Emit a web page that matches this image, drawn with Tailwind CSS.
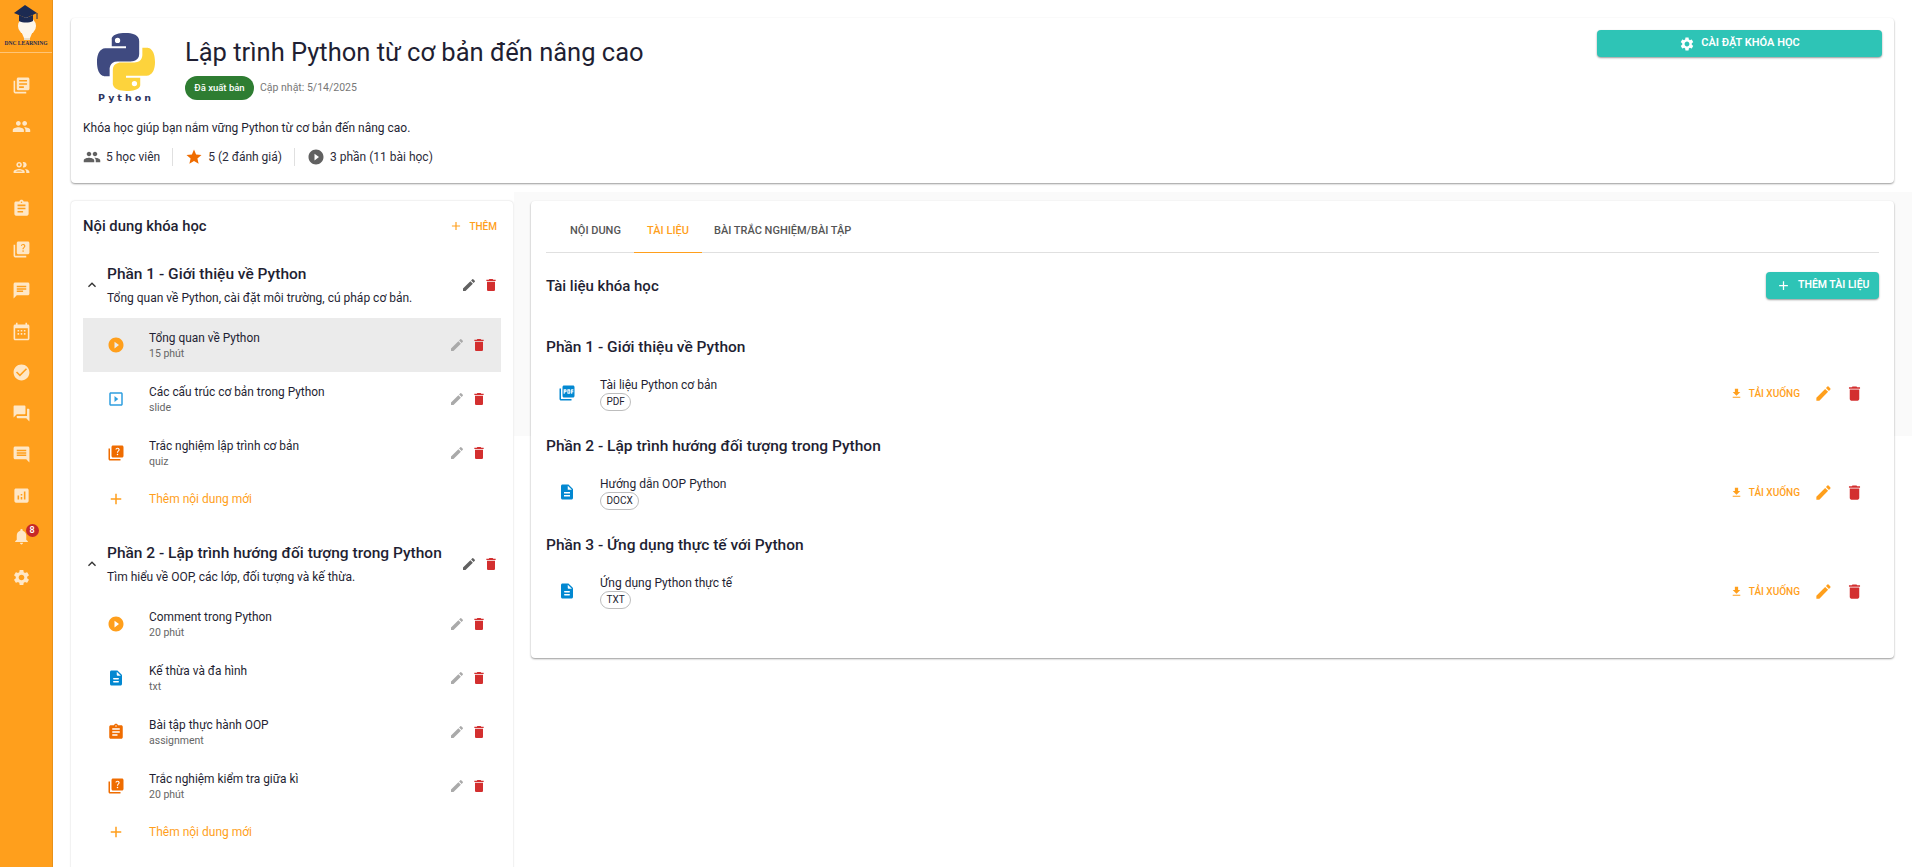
<!DOCTYPE html>
<html lang="vi">
<head>
    <meta charset="UTF-8">
    <meta name="viewport" content="width=device-width, initial-scale=1.0">
    <title>Lập trình Python từ cơ bản đến nâng cao</title>
    <script src="https://cdn.jsdelivr.net/npm/@tailwindcss/browser@4"></script>
</head>
<body class="bg-white h-[867px] overflow-hidden font-['Roboto','Noto_Sans',sans-serif] text-[#1f1f33]">
<svg class="hidden">
    <defs>
        <symbol id="i-book" viewBox="0 0 24 24"><path d="M4 6H2v14c0 1.100.9 2 2 2h14v-2H4zm16-4H8c-1.100 0-2 .9-2 2v12c0 1.100.9 2 2 2h12c1.100 0 2-.9 2-2V4c0-1.100-.9-2-2-2m-1 9H9V9h10zm-4 4H9v-2h6zm4-8H9V5h10z"/></symbol>
        <symbol id="i-people" viewBox="0 0 24 24"><path d="M16 11c1.660 0 2.990-1.340 2.990-3S17.660 5 16 5s-3 1.340-3 3 1.340 3 3 3m-8 0c1.660 0 2.990-1.340 2.990-3S9.660 5 8 5 5 6.340 5 8s1.340 3 3 3m0 2c-2.330 0-7 1.170-7 3.500V19h14v-2.500c0-2.330-4.670-3.500-7-3.500m8 0c-.29 0-.62.02-.97.05 1.160.84 1.970 1.970 1.970 3.450V19h6v-2.500c0-2.330-4.670-3.500-7-3.500"/></symbol>
        <symbol id="i-people-o" viewBox="0 0 24 24"><path d="M9 13.750c-2.340 0-7 1.170-7 3.500V19h14v-1.750c0-2.330-4.660-3.500-7-3.500M4.340 17c.84-.58 2.870-1.250 4.660-1.250s3.820.67 4.660 1.250zM9 12c1.930 0 3.500-1.570 3.500-3.500S10.930 5 9 5 5.500 6.570 5.500 8.500 7.070 12 9 12m0-5c.83 0 1.500.67 1.500 1.500S9.830 10 9 10s-1.500-.67-1.500-1.500S8.170 7 9 7m7.040 6.810c1.160.84 1.960 1.960 1.960 3.440V19h4v-1.750c0-2.020-3.500-3.170-5.960-3.440M15 12c1.930 0 3.500-1.570 3.500-3.500S16.930 5 15 5c-.54 0-1.040.13-1.500.35.630.89 1 1.980 1 3.150s-.37 2.260-1 3.150c.46.220.96.350 1.500.350"/></symbol>
        <symbol id="i-assignment" viewBox="0 0 24 24"><path d="M19 3h-4.180C14.400 1.840 13.300 1 12 1s-2.400.84-2.820 2H5c-1.100 0-2 .9-2 2v14c0 1.100.9 2 2 2h14c1.100 0 2-.9 2-2V5c0-1.100-.9-2-2-2m-7 0c.55 0 1 .45 1 1s-.45 1-1 1-1-.45-1-1 .45-1 1-1m2 14H7v-2h7zm3-4H7v-2h10zm0-4H7V7h10z"/></symbol>
        <symbol id="i-quiz" viewBox="0 0 24 24"><path d="M4 6H2v14c0 1.100.9 2 2 2h14v-2H4z"/><path d="M20 2H8c-1.100 0-2 .9-2 2v12c0 1.100.9 2 2 2h12c1.100 0 2-.9 2-2V4c0-1.100-.9-2-2-2m-5.990 13c-.59 0-1.050-.47-1.050-1.050 0-.59.47-1.040 1.050-1.040.59 0 1.040.45 1.040 1.040-.01.580-.45 1.050-1.040 1.050m2.500-6.170c-.63.930-1.230 1.210-1.560 1.810-.13.240-.18.400-.18 1.180h-1.520c0-.41-.06-1.080.26-1.650.41-.73 1.180-1.160 1.630-1.800.48-.680.210-1.950-1.140-1.950-.880 0-1.320.670-1.500 1.230l-1.370-.57C11.510 5.960 12.520 5 13.990 5c1.230 0 2.080.560 2.510 1.260.370.600.580 1.730.010 2.570"/></symbol>
        <symbol id="i-chat" viewBox="0 0 24 24"><path d="M20 2H4c-1.100 0-1.990.9-1.990 2L2 22l4-4h14c1.100 0 2-.9 2-2V4c0-1.100-.9-2-2-2M6 9h12v2H6zm8 5H6v-2h8zm4-6H6V6h12z"/></symbol>
        <symbol id="i-calendar" viewBox="0 0 24 24"><path d="M20 3h-1V1h-2v2H7V1H5v2H4c-1.100 0-2 .9-2 2v16c0 1.100.9 2 2 2h16c1.100 0 2-.9 2-2V5c0-1.100-.9-2-2-2m0 18H4V8h16zM7 10h2v2H7zm4 0h2v2h-2zm4 0h2v2h-2zm-8 4h2v2H7zm4 0h2v2h-2zm4 0h2v2h-2z"/></symbol>
        <symbol id="i-check" viewBox="0 0 24 24"><path d="M12 2C6.480 2 2 6.480 2 12s4.480 10 10 10 10-4.480 10-10S17.520 2 12 2m-2 15-5-5 1.410-1.410L10 14.170l7.590-7.590L19 8z"/></symbol>
        <symbol id="i-forum" viewBox="0 0 24 24"><path d="M21 6h-2v9H6v2c0 .55.45 1 1 1h11l4 4V7c0-.55-.45-1-1-1m-4 6V3c0-.55-.45-1-1-1H3c-.55 0-1 .45-1 1v14l4-4h10c.55 0 1-.45 1-1"/></symbol>
        <symbol id="i-comment" viewBox="0 0 24 24"><path d="M21.990 4c0-1.100-.89-2-1.990-2H4c-1.100 0-2 .9-2 2v12c0 1.100.9 2 2 2h14l4 4zM18 14H6v-2h12zm0-3H6V9h12zm0-3H6V6h12z"/></symbol>
        <symbol id="i-chart" viewBox="0 0 24 24"><path d="M19 3H5c-1.100 0-2 .9-2 2v14c0 1.100.9 2 2 2h14c1.100 0 2-.9 2-2V5c0-1.100-.9-2-2-2M9 17H7v-5h2zm4 0h-2v-3h2zm0-5h-2v-2h2zm4 5h-2V7h2z"/></symbol>
        <symbol id="i-bell" viewBox="0 0 24 24"><path d="M12 22c1.100 0 2-.9 2-2h-4c0 1.100.89 2 2 2m6-6v-5c0-3.070-1.640-5.640-4.500-6.320V4c0-.83-.67-1.500-1.500-1.500s-1.500.67-1.500 1.500v.68C7.630 5.360 6 7.920 6 11v5l-2 2v1h16v-1z"/></symbol>
        <symbol id="i-gear" viewBox="0 0 24 24"><path d="M19.140 12.940c.04-.3.060-.61.060-.94 0-.32-.02-.64-.07-.94l2.030-1.580c.18-.14.230-.41.120-.61l-1.920-3.320c-.12-.22-.37-.29-.59-.22l-2.390.96c-.5-.38-1.030-.7-1.620-.94l-.36-2.540c-.04-.24-.24-.41-.48-.41h-3.840c-.24 0-.43.170-.47.410l-.36 2.540c-.59.240-1.130.570-1.620.94l-2.390-.96c-.22-.08-.47 0-.59.220L2.740 8.870c-.12.210-.08.470.12.610l2.030 1.580c-.05.300-.09.630-.09.940s.02.640.07.940l-2.030 1.580c-.18.140-.23.410-.12.610l1.920 3.320c.12.220.37.290.59.220l2.390-.96c.5.380 1.030.7 1.620.94l.36 2.540c.05.240.24.410.48.410h3.840c.24 0 .44-.17.470-.41l.36-2.540c.59-.24 1.130-.56 1.620-.94l2.390.96c.22.080.47 0 .59-.22l1.920-3.320c.12-.22.070-.47-.12-.61zM12 15.600c-1.980 0-3.600-1.620-3.600-3.600s1.620-3.600 3.600-3.600 3.600 1.620 3.600 3.600-1.620 3.600-3.600 3.600"/></symbol>
        <symbol id="i-star" viewBox="0 0 24 24"><path d="M12 17.270 18.180 21l-1.640-7.030L22 9.240l-7.190-.61L12 2 9.190 8.630 2 9.240l5.460 4.730L5.820 21z"/></symbol>
        <symbol id="i-play" viewBox="0 0 24 24"><path d="M12 2C6.480 2 2 6.480 2 12s4.480 10 10 10 10-4.480 10-10S17.520 2 12 2m-2 14.500v-9l6 4.500z"/></symbol>
        <symbol id="i-slide" viewBox="0 0 24 24"><path d="M10 8v8l5-4zm9-5H5c-1.100 0-2 .9-2 2v14c0 1.100.9 2 2 2h14c1.100 0 2-.9 2-2V5c0-1.100-.9-2-2-2m0 16H5V5h14z"/></symbol>
        <symbol id="i-doc" viewBox="0 0 24 24"><path d="M14 2H6c-1.100 0-1.990.9-1.990 2L4 20c0 1.100.89 2 1.990 2H18c1.100 0 2-.9 2-2V8zm2 16H8v-2h8zm0-4H8v-2h8zm-3-5V3.500L18.500 9z"/></symbol>
        <symbol id="i-txt" viewBox="0 0 24 24"><path d="M14.590 2.590c-.38-.38-.89-.59-1.420-.59H6c-1.100 0-2 .9-2 2v16c0 1.100.89 2 1.990 2H18c1.100 0 2-.9 2-2V8.830c0-.53-.21-1.040-.59-1.410zM15 18H9c-.55 0-1-.45-1-1s.45-1 1-1h6c.55 0 1 .45 1 1s-.45 1-1 1m0-4H9c-.55 0-1-.45-1-1s.45-1 1-1h6c.55 0 1 .45 1 1s-.45 1-1 1m-2-6V3.500L18.500 9H14c-.55 0-1-.45-1-1"/></symbol>
        <symbol id="i-pdf" viewBox="0 0 24 24"><path d="M20 2H8c-1.100 0-2 .9-2 2v12c0 1.100.9 2 2 2h12c1.100 0 2-.9 2-2V4c0-1.100-.9-2-2-2m-8.500 7.500c0 .83-.67 1.500-1.500 1.500H9v2H7.500V7H10c.83 0 1.500.67 1.500 1.500zm5 2c0 .83-.67 1.500-1.500 1.500h-2.500V7H15c.83 0 1.500.67 1.500 1.500zm4-3H19v1h1.500V11H19v2h-1.500V7h3zM9 9.500h1v-1H9zM4 6H2v14c0 1.100.9 2 2 2h14v-2H4zm10 5.500h1v-3h-1z"/></symbol>
        <symbol id="i-edit" viewBox="0 0 24 24"><path d="M3 17.250V21h3.750L17.810 9.940l-3.750-3.750zM20.710 7.040c.39-.39.39-1.020 0-1.410l-2.340-2.340a.996.996 0 0 0-1.410 0l-1.830 1.830 3.750 3.750z"/></symbol>
        <symbol id="i-trash" viewBox="0 0 24 24"><path d="M6 19c0 1.100.9 2 2 2h8c1.100 0 2-.9 2-2V7H6zM19 4h-3.500l-1-1h-5l-1 1H5v2h14z"/></symbol>
        <symbol id="i-plus" viewBox="0 0 24 24"><path d="M19 13h-6v6h-2v-6H5v-2h6V5h2v6h6z"/></symbol>
        <symbol id="i-up" viewBox="0 0 24 24"><path d="M7.410 15.410 12 10.830l4.590 4.580L18 14l-6-6-6 6z"/></symbol>
        <symbol id="i-download" viewBox="0 0 24 24"><path d="M19 9h-4V3H9v6H5l7 7zM5 18v2h14v-2z"/></symbol>
    </defs>
</svg>

<div class="flex h-full">
    <!-- sidebar -->
    <aside class="w-[53px] shrink-0 h-full bg-[#ff9f1c] border-r border-[#e8911a] flex flex-col text-white/75">
        <div class="relative w-full h-[53px] border-b border-white/40">
            <svg viewBox="0 0 53 42" class="w-[53px] h-[42px]">
                <circle cx="27" cy="26" r="9" fill="#fdf6ea"/>
                <path d="M21 31h12l-3 7h-6z" fill="#fdf6ea"/>
                <path d="M24 38h6v2h-6z" fill="#e9ddc8"/>
                <path d="M25 5 37 13 26 18 14 13z" fill="#1c2a52"/>
                <path d="M19 15v6c4 2 10 2 14 0v-6l-7 3z" fill="#1c2a52"/>
                <path d="M37 13v6" stroke="#1c2a52" stroke-width="1"/>
            </svg>
            <span class="absolute left-0 top-[39px] w-[52px] text-center text-[5.500px] leading-[8px] font-bold text-[#1c2a52] font-['Liberation_Serif',serif] whitespace-nowrap">DNC LEARNING</span>
        </div>
        <nav class="flex flex-col items-center gap-[22px] mt-[22.500px] ml-[11.500px] w-[19px]">
            <svg class="size-[19px]" fill="currentColor"><use href="#i-book"/></svg>
            <svg class="size-[19px]" fill="currentColor"><use href="#i-people"/></svg>
            <svg class="size-[19px]" fill="currentColor"><use href="#i-people-o"/></svg>
            <svg class="size-[19px]" fill="currentColor"><use href="#i-assignment"/></svg>
            <svg class="size-[19px]" fill="currentColor"><use href="#i-quiz"/></svg>
            <svg class="size-[19px]" fill="currentColor"><use href="#i-chat"/></svg>
            <svg class="size-[19px]" fill="currentColor"><use href="#i-calendar"/></svg>
            <svg class="size-[19px]" fill="currentColor"><use href="#i-check"/></svg>
            <svg class="size-[19px]" fill="currentColor"><use href="#i-forum"/></svg>
            <svg class="size-[19px]" fill="currentColor"><use href="#i-comment"/></svg>
            <svg class="size-[19px]" fill="currentColor"><use href="#i-chart"/></svg>
            <div class="relative size-[19px]">
                <svg class="size-[19px]" fill="currentColor"><use href="#i-bell"/></svg>
                <span class="absolute -top-[3px] left-[14px] size-[13px] rounded-full bg-[#c62828] text-white text-[9px] leading-[13px] text-center font-semibold">8</span>
            </div>
            <svg class="size-[19px]" fill="currentColor"><use href="#i-gear"/></svg>
        </nav>
    </aside>

    <!-- page -->
    <main class="flex-1 min-w-0 px-[18px] pt-[18px] relative">
        <div class="absolute left-[461px] right-0 top-[192px] h-[244px] bg-[#fafafa] -z-10"></div>

        <!-- course header -->
        <section class="h-[165px] bg-white rounded-[4px] shadow-[0_1px_2px_rgba(0,0,0,0.4)] px-[12px] flex flex-col">
            <div class="flex justify-between items-start pt-[12px]">
                <div class="flex">
                    <div class="w-[58px] ml-[14px] mt-[3px] flex flex-col items-center">
                        <svg viewBox="0 0 110 110" class="w-[58px] h-[58px] shrink-0">
                            <path d="M54 0C26 0 28 12 28 12v13h27v4H17S0 27 0 55s15 27 15 27h9V69s-1-15 15-15h26s15 0 15-14V15S82 0 54 0zM39 9a5 5 0 1 1 0 10 5 5 0 0 1 0-10z" fill="#3f4a80"/>
                            <path d="M56 110c28 0 26-12 26-12V85H55v-4h38s17 2 17-26-15-27-15-27h-9v13s1 15-15 15H45s-15 0-15 14v25s-2 15 26 15zm15-9a5 5 0 1 1 0-10 5 5 0 0 1 0 10z" fill="#fdd33c"/>
                        </svg>
                        <span class="text-[9.500px] leading-[12px] font-bold tracking-[3px] text-[#2f3560] mt-[1px] font-['DejaVu_Sans',sans-serif]">Python</span>
                    </div>
                    <div class="ml-[30px]">
                        <h1 class="text-[25.500px] leading-[36px] mt-[4px] whitespace-nowrap">Lập trình Python từ cơ bản đến nâng cao</h1>
                        <div class="flex items-center mt-[6px]">
                            <span class="h-[24px] w-[69px] rounded-full bg-[#2e7d32] text-white text-[9.500px] leading-[24px] text-center font-medium whitespace-nowrap">Đã xuất bản</span>
                            <span class="ml-[6px] text-[10.500px] text-[#777]">Cập nhật: 5/14/2025</span>
                        </div>
                    </div>
                </div>
                <button class="w-[285px] h-[27px] bg-[#2ec4b6] rounded-[4px] shadow-[0_1px_2px_rgba(0,0,0,0.4)] text-white text-[11px] font-semibold flex items-center justify-center gap-[6px]">
                    <svg class="size-[16px]" fill="currentColor"><use href="#i-gear"/></svg>CÀI ĐẶT KHÓA HỌC
                </button>
            </div>
            <p class="text-[12px] leading-[18px] mt-[15px]">Khóa học giúp bạn nắm vững Python từ cơ bản đến nâng cao.</p>
            <div class="flex items-center mt-[11px] text-[12px] text-[#2b2b3a]">
                <svg class="size-[18px] text-[#616161]" fill="currentColor"><use href="#i-people"/></svg>
                <span class="ml-[5px]">5 học viên</span>
                <span class="w-px h-[18px] bg-[#e0e0e0] mx-[12px]"></span>
                <svg class="size-[18px] text-[#ef6c00]" fill="currentColor"><use href="#i-star"/></svg>
                <span class="ml-[5px]">5 (2 đánh giá)</span>
                <span class="w-px h-[18px] bg-[#e0e0e0] mx-[12px]"></span>
                <svg class="size-[18px] text-[#616161]" fill="currentColor"><use href="#i-play"/></svg>
                <span class="ml-[5px]">3 phần (11 bài học)</span>
            </div>
        </section>

        <div class="flex gap-[18px] mt-[18px] items-start">
            <!-- outline -->
            <section class="w-[442px] shrink-0 h-[680px] bg-white rounded-[4px] shadow-[0_0_2px_rgba(0,0,0,0.2)] px-[12px]">
                <div class="flex justify-between items-center h-[50px]">
                    <h2 class="text-[14.800px] font-medium">Nội dung khóa học</h2>
                    <span class="flex items-center text-[#ff9f1c] text-[10px] font-medium mr-[4px]">
                        <svg class="size-[14px] mr-[6px]" fill="currentColor"><use href="#i-plus"/></svg>THÊM
                    </span>
                </div>

                <div class="flex items-center mt-[12px]">
                    <svg class="size-[16px] ml-[1px] text-[#333]" fill="currentColor"><use href="#i-up"/></svg>
                    <div class="ml-[7px] flex-1 min-w-0">
                        <h3 class="text-[15.500px] leading-[22px] font-medium">Phần 1 - Giới thiệu về Python</h3>
                        <p class="text-[12px] leading-[18px] mt-[4px]">Tổng quan về Python, cài đặt môi trường, cú pháp cơ bản.</p>
                    </div>
                    <svg class="size-[16px] text-[#616161]" fill="currentColor"><use href="#i-edit"/></svg>
                    <svg class="size-[16px] ml-[6px] mr-[2px] text-[#d32f2f]" fill="currentColor"><use href="#i-trash"/></svg>
                </div>

                <div class="mt-[11px]">
                    <div class="flex items-center h-[54px] bg-[#ebebeb] pl-[24px] pr-[14px]">
                        <svg class="size-[18px] text-[#ff9f1c]" fill="currentColor"><use href="#i-play"/></svg>
                        <div class="ml-[24px] flex-1 min-w-0 leading-[15px] pt-[2px]"><div class="text-[11.900px]">Tổng quan về Python</div><div class="text-[10.500px] text-[#666]">15 phút</div></div>
                        <svg class="size-[16px] text-[#aaa]" fill="currentColor"><use href="#i-edit"/></svg>
                        <svg class="size-[16px] ml-[6px] text-[#d32f2f]" fill="currentColor"><use href="#i-trash"/></svg>
                    </div>
                    <div class="flex items-center h-[54px] pl-[24px] pr-[14px]">
                        <svg class="size-[18px] text-[#2f9fe0]" fill="currentColor"><use href="#i-slide"/></svg>
                        <div class="ml-[24px] flex-1 min-w-0 leading-[15px] pt-[2px]"><div class="text-[11.900px]">Các cấu trúc cơ bản trong Python</div><div class="text-[10.500px] text-[#666]">slide</div></div>
                        <svg class="size-[16px] text-[#aaa]" fill="currentColor"><use href="#i-edit"/></svg>
                        <svg class="size-[16px] ml-[6px] text-[#d32f2f]" fill="currentColor"><use href="#i-trash"/></svg>
                    </div>
                    <div class="flex items-center h-[54px] pl-[24px] pr-[14px]">
                        <svg class="size-[18px] text-[#ef6c00]" fill="currentColor"><use href="#i-quiz"/></svg>
                        <div class="ml-[24px] flex-1 min-w-0 leading-[15px] pt-[2px]"><div class="text-[11.900px]">Trắc nghiệm lập trình cơ bản</div><div class="text-[10.500px] text-[#666]">quiz</div></div>
                        <svg class="size-[16px] text-[#aaa]" fill="currentColor"><use href="#i-edit"/></svg>
                        <svg class="size-[16px] ml-[6px] text-[#d32f2f]" fill="currentColor"><use href="#i-trash"/></svg>
                    </div>
                    <div class="flex items-center h-[37px] pl-[24px] text-[#ff9f1c]">
                        <svg class="size-[18px]" fill="currentColor"><use href="#i-plus"/></svg>
                        <span class="ml-[24px] text-[12px]">Thêm nội dung mới</span>
                    </div>
                </div>

                <div class="flex items-center mt-[25px]">
                    <svg class="size-[16px] ml-[1px] text-[#333]" fill="currentColor"><use href="#i-up"/></svg>
                    <div class="ml-[7px] flex-1 min-w-0">
                        <h3 class="text-[15.500px] leading-[22px] font-medium whitespace-nowrap">Phần 2 - Lập trình hướng đối tượng trong Python</h3>
                        <p class="text-[12px] leading-[18px] mt-[4px]">Tìm hiểu về OOP, các lớp, đối tượng và kế thừa.</p>
                    </div>
                    <svg class="size-[16px] text-[#616161]" fill="currentColor"><use href="#i-edit"/></svg>
                    <svg class="size-[16px] ml-[6px] mr-[2px] text-[#d32f2f]" fill="currentColor"><use href="#i-trash"/></svg>
                </div>

                <div class="mt-[11px]">
                    <div class="flex items-center h-[54px] pl-[24px] pr-[14px]">
                        <svg class="size-[18px] text-[#ff9f1c]" fill="currentColor"><use href="#i-play"/></svg>
                        <div class="ml-[24px] flex-1 min-w-0 leading-[15px] pt-[2px]"><div class="text-[11.900px]">Comment trong Python</div><div class="text-[10.500px] text-[#666]">20 phút</div></div>
                        <svg class="size-[16px] text-[#aaa]" fill="currentColor"><use href="#i-edit"/></svg>
                        <svg class="size-[16px] ml-[6px] text-[#d32f2f]" fill="currentColor"><use href="#i-trash"/></svg>
                    </div>
                    <div class="flex items-center h-[54px] pl-[24px] pr-[14px]">
                        <svg class="size-[18px] text-[#0288d1]" fill="currentColor"><use href="#i-txt"/></svg>
                        <div class="ml-[24px] flex-1 min-w-0 leading-[15px] pt-[2px]"><div class="text-[11.900px]">Kế thừa và đa hình</div><div class="text-[10.500px] text-[#666]">txt</div></div>
                        <svg class="size-[16px] text-[#aaa]" fill="currentColor"><use href="#i-edit"/></svg>
                        <svg class="size-[16px] ml-[6px] text-[#d32f2f]" fill="currentColor"><use href="#i-trash"/></svg>
                    </div>
                    <div class="flex items-center h-[54px] pl-[24px] pr-[14px]">
                        <svg class="size-[18px] text-[#ef6c00]" fill="currentColor"><use href="#i-assignment"/></svg>
                        <div class="ml-[24px] flex-1 min-w-0 leading-[15px] pt-[2px]"><div class="text-[11.900px]">Bài tập thực hành OOP</div><div class="text-[10.500px] text-[#666]">assignment</div></div>
                        <svg class="size-[16px] text-[#aaa]" fill="currentColor"><use href="#i-edit"/></svg>
                        <svg class="size-[16px] ml-[6px] text-[#d32f2f]" fill="currentColor"><use href="#i-trash"/></svg>
                    </div>
                    <div class="flex items-center h-[54px] pl-[24px] pr-[14px]">
                        <svg class="size-[18px] text-[#ef6c00]" fill="currentColor"><use href="#i-quiz"/></svg>
                        <div class="ml-[24px] flex-1 min-w-0 leading-[15px] pt-[2px]"><div class="text-[11.900px]">Trắc nghiệm kiểm tra giữa kì</div><div class="text-[10.500px] text-[#666]">20 phút</div></div>
                        <svg class="size-[16px] text-[#aaa]" fill="currentColor"><use href="#i-edit"/></svg>
                        <svg class="size-[16px] ml-[6px] text-[#d32f2f]" fill="currentColor"><use href="#i-trash"/></svg>
                    </div>
                    <div class="flex items-center h-[37px] pl-[24px] text-[#ff9f1c]">
                        <svg class="size-[18px]" fill="currentColor"><use href="#i-plus"/></svg>
                        <span class="ml-[24px] text-[12px]">Thêm nội dung mới</span>
                    </div>
                </div>
            </section>

            <!-- tabs panel -->
            <section class="flex-1 min-w-0 h-[457px] bg-white rounded-[4px] shadow-[0_1px_2px_rgba(0,0,0,0.4)] px-[15px] pt-[10px]">
                <div class="flex border-b border-[#e0e0e0] h-[42px] pl-[24px] text-[11px] font-medium text-[#555]">
                    <span class="w-[64px] flex items-center">NỘI DUNG</span>
                    <span class="w-[68px] h-[42px] flex items-center justify-center text-[#ff9f1c] border-b-[1.500px] border-[#ff9f1c]">TÀI LIỆU</span>
                    <span class="pl-[12px] flex items-center">BÀI TRẮC NGHIỆM/BÀI TẬP</span>
                </div>
                <div class="flex items-center justify-between mt-[18px] h-[28px]">
                    <h2 class="text-[15px] font-medium pt-[2px]">Tài liệu khóa học</h2>
                    <button class="w-[113px] h-[27px] bg-[#2ec4b6] rounded-[4px] shadow-[0_1px_2px_rgba(0,0,0,0.4)] text-white text-[10.500px] font-semibold flex items-center justify-center gap-[7.500px]">
                        <svg class="size-[15px]" fill="currentColor"><use href="#i-plus"/></svg>THÊM TÀI LIỆU
                    </button>
                </div>

                <h3 class="text-[15.500px] leading-[20px] font-medium mt-[38px]">Phần 1 - Giới thiệu về Python</h3>
                <div class="flex items-center mt-[21px]">
                    <svg class="size-[18px] -mt-[3px] ml-[12px] text-[#0288d1]" fill="currentColor"><use href="#i-pdf"/></svg>
                    <div class="ml-[24px] flex-1"><div class="text-[12px] leading-[14px] mb-[1px]">Tài liệu Python cơ bản</div><span class="block w-fit border border-[#bdbdbd] rounded-full text-[10px] leading-[16px] px-[5.500px]">PDF</span></div>
                    <span class="-mt-[3px] flex items-center text-[#ff9f1c] text-[10px] font-medium"><svg class="size-[13px] mr-[6px]" fill="currentColor"><use href="#i-download"/></svg>TẢI XUỐNG</span>
                    <svg class="size-[19px] -mt-[3px] ml-[13.500px] text-[#ff9f1c]" fill="currentColor"><use href="#i-edit"/></svg>
                    <svg class="size-[19px] -mt-[3px] ml-[12px] mr-[15.500px] text-[#d32f2f]" fill="currentColor"><use href="#i-trash"/></svg>
                </div>

                <h3 class="text-[15.500px] leading-[20px] font-medium mt-[25px]">Phần 2 - Lập trình hướng đối tượng trong Python</h3>
                <div class="flex items-center mt-[21px]">
                    <svg class="size-[18px] -mt-[3px] ml-[12px] text-[#0288d1]" fill="currentColor"><use href="#i-doc"/></svg>
                    <div class="ml-[24px] flex-1"><div class="text-[12px] leading-[14px] mb-[1px]">Hướng dẫn OOP Python</div><span class="block w-fit border border-[#bdbdbd] rounded-full text-[10px] leading-[16px] px-[5.500px]">DOCX</span></div>
                    <span class="-mt-[3px] flex items-center text-[#ff9f1c] text-[10px] font-medium"><svg class="size-[13px] mr-[6px]" fill="currentColor"><use href="#i-download"/></svg>TẢI XUỐNG</span>
                    <svg class="size-[19px] -mt-[3px] ml-[13.500px] text-[#ff9f1c]" fill="currentColor"><use href="#i-edit"/></svg>
                    <svg class="size-[19px] -mt-[3px] ml-[12px] mr-[15.500px] text-[#d32f2f]" fill="currentColor"><use href="#i-trash"/></svg>
                </div>

                <h3 class="text-[15.500px] leading-[20px] font-medium mt-[25px]">Phần 3 - Ứng dụng thực tế với Python</h3>
                <div class="flex items-center mt-[21px]">
                    <svg class="size-[18px] -mt-[3px] ml-[12px] text-[#0288d1]" fill="currentColor"><use href="#i-txt"/></svg>
                    <div class="ml-[24px] flex-1"><div class="text-[12px] leading-[14px] mb-[1px]">Ứng dụng Python thực tế</div><span class="block w-fit border border-[#bdbdbd] rounded-full text-[10px] leading-[16px] px-[5.500px]">TXT</span></div>
                    <span class="-mt-[3px] flex items-center text-[#ff9f1c] text-[10px] font-medium"><svg class="size-[13px] mr-[6px]" fill="currentColor"><use href="#i-download"/></svg>TẢI XUỐNG</span>
                    <svg class="size-[19px] -mt-[3px] ml-[13.500px] text-[#ff9f1c]" fill="currentColor"><use href="#i-edit"/></svg>
                    <svg class="size-[19px] -mt-[3px] ml-[12px] mr-[15.500px] text-[#d32f2f]" fill="currentColor"><use href="#i-trash"/></svg>
                </div>
            </section>
        </div>
    </main>
</div>
</body>
</html>
